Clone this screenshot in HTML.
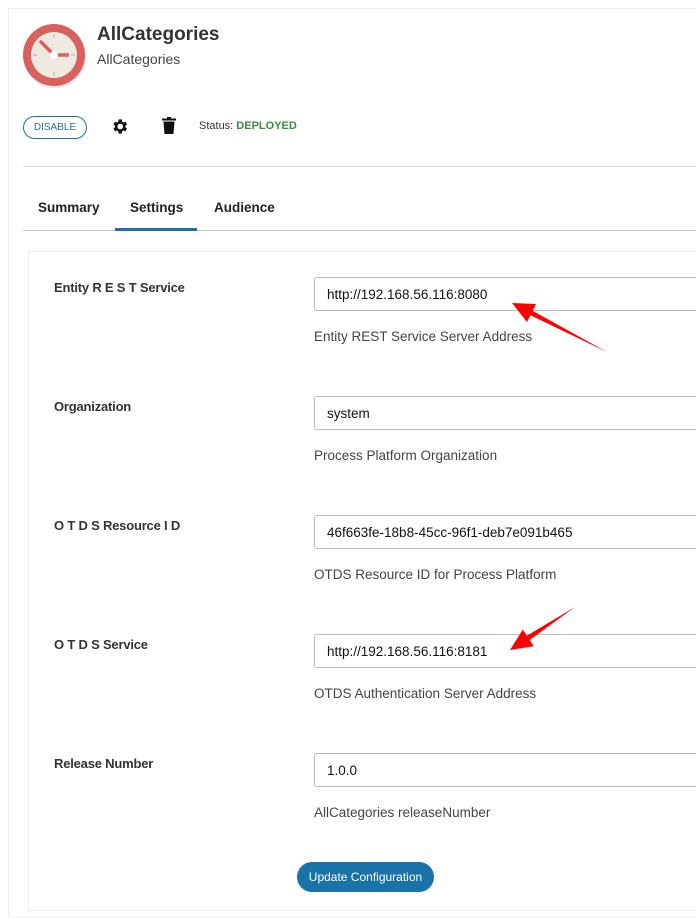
<!DOCTYPE html>
<html><head><style>
body{margin:0;width:696px;height:905px;overflow:hidden;background:#fff;font-family:"Liberation Sans",sans-serif;color:#222;position:relative}
.a{position:absolute}
.card{left:8px;top:8px;width:700px;height:910px;border:1px solid #eee;box-sizing:border-box}
.lbl{left:54px;font-size:13px;font-weight:bold;color:#333;letter-spacing:-0.2px}
.in{left:314px;width:400px;height:34px;border:1px solid #bbb;border-radius:3px;box-sizing:border-box;font-size:13.5px;padding:9px 12px;color:#111}
.help{left:314px;font-size:13.5px;color:#444}
</style></head><body>
<div class="a card"></div>
<svg class="a" style="left:22px;top:23px" width="66" height="66" viewBox="0 0 66 66">
<circle cx="33" cy="34" r="31" fill="#bbb" opacity=".4"/>
<circle cx="32" cy="32" r="31" fill="#d9605c"/>
<circle cx="32" cy="32" r="23" fill="#efe9e0"/>
<g stroke="#ccc" stroke-width="2"><line x1="32" y1="11" x2="32" y2="15"/><line x1="32" y1="49" x2="32" y2="53"/><line x1="11" y1="32" x2="15" y2="32"/><line x1="49" y1="32" x2="53" y2="32"/></g>
<line x1="32" y1="32" x2="19" y2="19" stroke="#d9605c" stroke-width="3.5" stroke-linecap="round"/>
<line x1="32" y1="32" x2="47" y2="32" stroke="#d9605c" stroke-width="3.5"/>
<circle cx="32" cy="32" r="4" fill="#fff"/>
</svg>
<div class="a" style="left:97px;top:24px;font-size:19px;font-weight:bold;color:#333">AllCategories</div>
<div class="a" style="left:97px;top:51px;font-size:14px;color:#444">AllCategories</div>
<div class="a" style="left:23px;top:116px;width:64px;height:23px;border:1px solid #1a73a8;border-radius:12px;box-sizing:border-box;color:#1a73a8;font-size:10px;text-align:center;line-height:21px">DISABLE</div>
<svg class="a" style="left:110px;top:117px" width="19" height="19" viewBox="0 0 24 24"><path fill="#111" d="M19.4 13a7.5 7.5 0 0 0 0-2l2.1-1.6-2-3.5-2.5 1a7 7 0 0 0-1.7-1L14.9 3h-4l-.4 2.9a7 7 0 0 0-1.7 1l-2.5-1-2 3.5L6.4 11a7.5 7.5 0 0 0 0 2l-2.1 1.6 2 3.5 2.5-1a7 7 0 0 0 1.7 1l.4 2.9h4l.4-2.9a7 7 0 0 0 1.7-1l2.5 1 2-3.5zM12.9 15.5a3.5 3.5 0 1 1 0-7 3.5 3.5 0 0 1 0 7z"/></svg>
<svg class="a" style="left:162px;top:117px" width="14" height="17" viewBox="0 0 14 17"><rect x="0" y="1.5" width="14" height="2" fill="#111"/><rect x="5" y="0" width="4" height="2" fill="#111"/><path d="M1.5 4.5h11l-1 12.5h-9z" fill="#111"/></svg>
<div class="a" style="left:199px;top:120px;font-size:11px;color:#333">Status: <b style="color:#3d8a3d">DEPLOYED</b></div>
<div class="a" style="left:23px;top:166px;width:680px;height:1px;background:#ddd"></div>
<div class="a" style="left:38px;top:200px;font-size:13.5px;font-weight:bold;color:#222">Summary</div>
<div class="a" style="left:130px;top:200px;font-size:13.5px;font-weight:bold;color:#222">Settings</div>
<div class="a" style="left:214px;top:200px;font-size:13.5px;font-weight:bold;color:#222">Audience</div>
<div class="a" style="left:23px;top:230px;width:680px;height:1px;background:#ccc"></div>
<div class="a" style="left:115px;top:228px;width:82px;height:3px;background:#1a73a8"></div>
<div class="a" style="left:28px;top:251px;width:680px;height:660px;border:1px solid #eee;box-sizing:border-box"></div>

<div class="a lbl" style="top:280px">Entity R E S T Service</div>
<div class="a in" style="top:277px">http://192.168.56.116:8080</div>
<div class="a help" style="top:329px">Entity REST Service Server Address</div>

<div class="a lbl" style="top:399px">Organization</div>
<div class="a in" style="top:396px">system</div>
<div class="a help" style="top:448px">Process Platform Organization</div>

<div class="a lbl" style="top:518px">O T D S Resource I D</div>
<div class="a in" style="top:515px">46f663fe-18b8-45cc-96f1-deb7e091b465</div>
<div class="a help" style="top:567px">OTDS Resource ID for Process Platform</div>

<div class="a lbl" style="top:637px">O T D S Service</div>
<div class="a in" style="top:634px">http://192.168.56.116:8181</div>
<div class="a help" style="top:686px">OTDS Authentication Server Address</div>

<div class="a lbl" style="top:756px">Release Number</div>
<div class="a in" style="top:753px">1.0.0</div>
<div class="a help" style="top:805px">AllCategories releaseNumber</div>

<div class="a" style="left:297px;top:862px;width:137px;height:30px;border-radius:15px;background:#1a73a8;color:#fff;font-size:12px;text-align:center;line-height:30px">Update Configuration</div>

<svg class="a" style="left:0;top:0" width="696" height="905">
<polygon points="512,303 536,304 532.7,310.9 607,352 530.4,315.3 527,322" fill="#f00"/>
<polygon points="510,650 522.8,629.6 526.9,635.8 575,607 529.7,640 533.8,646.2" fill="#f00"/>
</svg>
</body></html>
